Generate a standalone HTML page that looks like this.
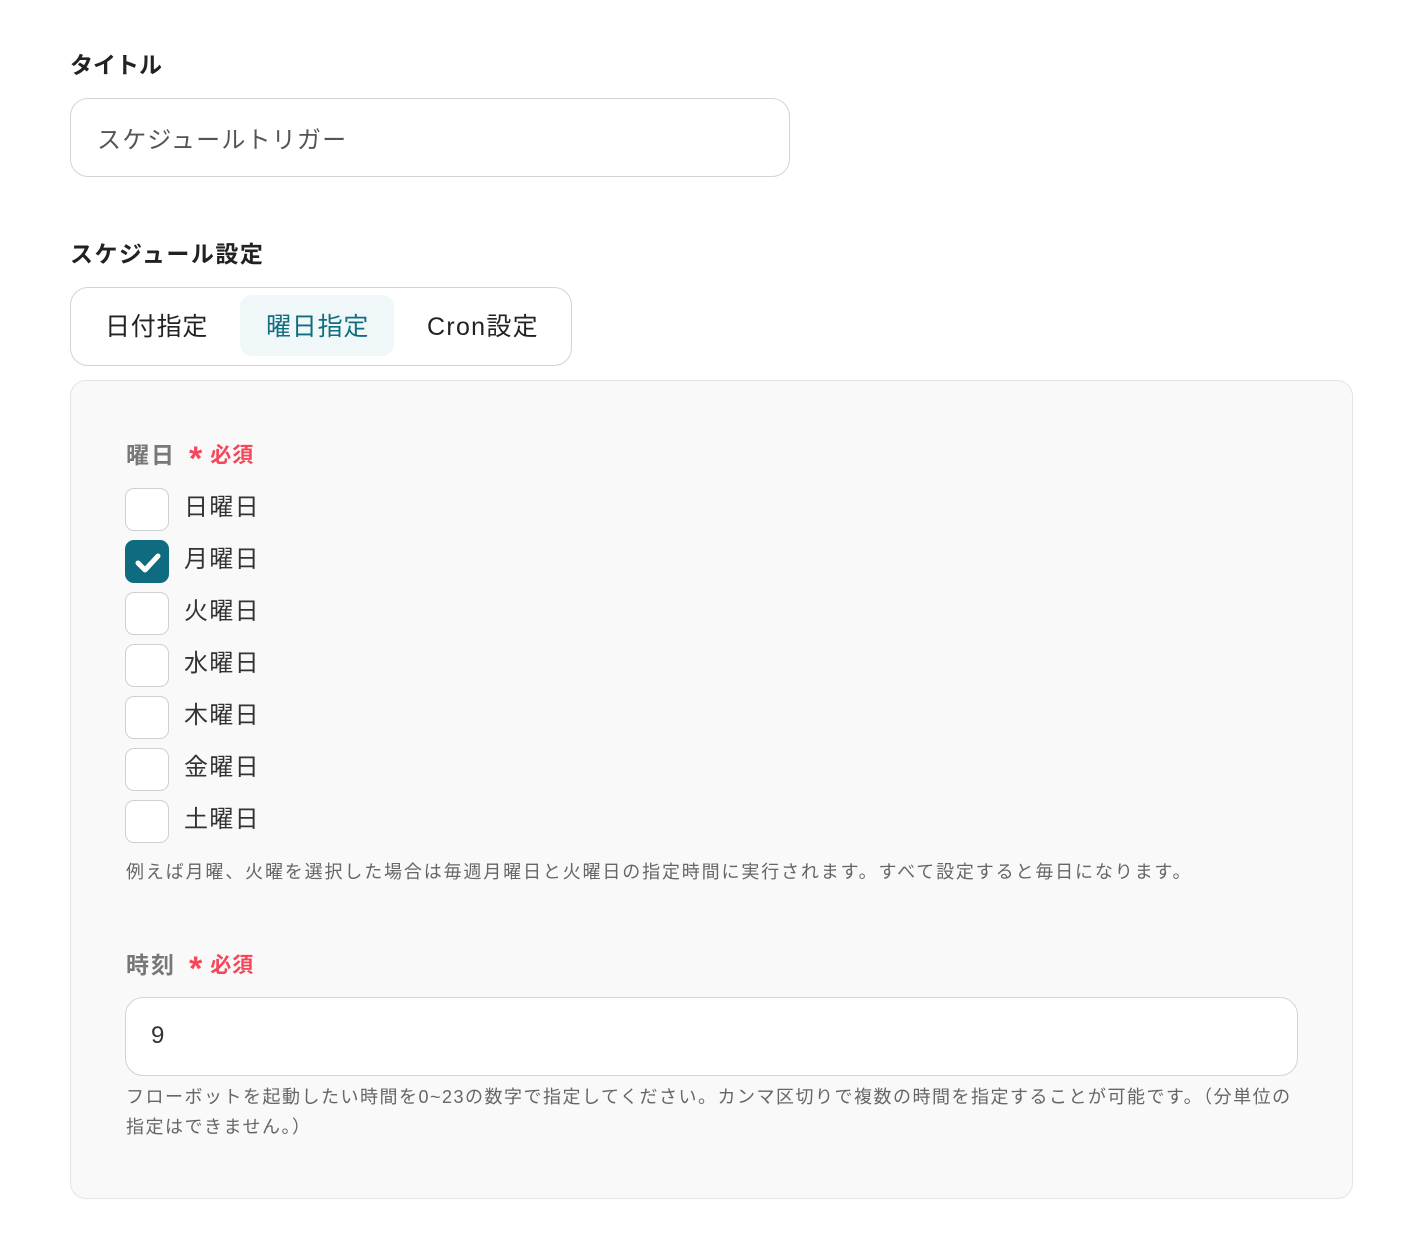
<!DOCTYPE html>
<html><head><meta charset="utf-8"><style>
*{box-sizing:border-box;margin:0;padding:0}
body{width:1404px;height:1244px;background:#fff;font-family:"Liberation Sans","Noto Sans CJK JP",sans-serif;color:#222;position:relative}
.a{position:absolute}
.lbl{font-size:23px;font-weight:bold;color:#222}
.inp{border:1px solid #d4d4d4;border-radius:18px;background:#fff}
.cb{position:absolute;left:125px;width:44px;height:43px;border:1px solid #d0d0d0;border-radius:9px;background:#fff}
.cl{position:absolute;left:184px;font-size:24px;color:#333;line-height:43px;letter-spacing:1.3px}
.req{color:#f5475a;font-size:21px;font-weight:bold}
.help{font-size:18px;color:#666;line-height:30px;letter-spacing:1.85px}
</style></head><body>
<div class="a lbl" style="left:70px;top:46px">タイトル</div>
<div class="a inp" style="left:70px;top:98px;width:720px;height:79px"></div>
<div class="a" style="left:97px;top:120px;font-size:24px;color:#555;letter-spacing:1.2px">スケジュールトリガー</div>
<div class="a lbl" style="left:70px;top:235px;letter-spacing:1.5px">スケジュール設定</div>
<div class="a inp" style="left:70px;top:287px;width:502px;height:79px"></div>
<div class="a" style="left:240px;top:295px;width:154px;height:61px;background:#eff7f8;border-radius:12px"></div>
<div class="a" style="left:105px;top:307px;font-size:25px;color:#222;letter-spacing:0.8px">日付指定</div>
<div class="a" style="left:266px;top:307px;font-size:25px;color:#0f6e80;letter-spacing:0.8px">曜日指定</div>
<div class="a" style="left:427px;top:307px;font-size:25px;color:#222;letter-spacing:1.3px">Cron設定</div>
<div class="a" style="left:70px;top:380px;width:1283px;height:819px;background:#f9f9f9;border:1px solid #e4e4e4;border-radius:16px"></div>
<div class="a" style="left:126px;top:436px;font-size:23px;font-weight:bold;color:#777;letter-spacing:2px">曜日</div>
<div class="a req" style="left:189px;top:432px"><span style="font-size:34px;position:relative;top:8px">*</span><span style="margin-left:8px;letter-spacing:1px">必須</span></div>
<div class="cb" style="top:488px"></div><div class="cl" style="top:486px">日曜日</div>
<div class="cb" style="top:540px;background:#0f6b80;border-color:#0f6b80"><svg width="44" height="43" viewBox="0 0 44 43"><path d="M12 22l7 7 13-14" fill="none" stroke="#fff" stroke-width="5" stroke-linecap="round" stroke-linejoin="round"/></svg></div><div class="cl" style="top:538px">月曜日</div>
<div class="cb" style="top:592px"></div><div class="cl" style="top:590px">火曜日</div>
<div class="cb" style="top:644px"></div><div class="cl" style="top:642px">水曜日</div>
<div class="cb" style="top:696px"></div><div class="cl" style="top:694px">木曜日</div>
<div class="cb" style="top:748px"></div><div class="cl" style="top:746px">金曜日</div>
<div class="cb" style="top:800px"></div><div class="cl" style="top:798px">土曜日</div>
<div class="a help" style="left:126px;top:857px;white-space:nowrap">例えば月曜、火曜を選択した場合は毎週月曜日と火曜日の指定時間に実行されます。すべて設定すると毎日になります。</div>
<div class="a" style="left:126px;top:946px;font-size:23px;font-weight:bold;color:#777;letter-spacing:2px">時刻</div>
<div class="a req" style="left:189px;top:942px"><span style="font-size:34px;position:relative;top:8px">*</span><span style="margin-left:8px;letter-spacing:1px">必須</span></div>
<div class="a inp" style="left:125px;top:997px;width:1173px;height:79px"></div>
<div class="a" style="left:151px;top:1022px;font-size:24px;color:#333">9</div>
<div class="a help" style="left:126px;top:1082px;width:1200px;white-space:nowrap;letter-spacing:1.5px">フローボットを起動したい時間を0~23の数字で指定してください。カンマ区切りで複数の時間を指定することが可能です。（分単位の<br>指定はできません。）</div>
</body></html>
